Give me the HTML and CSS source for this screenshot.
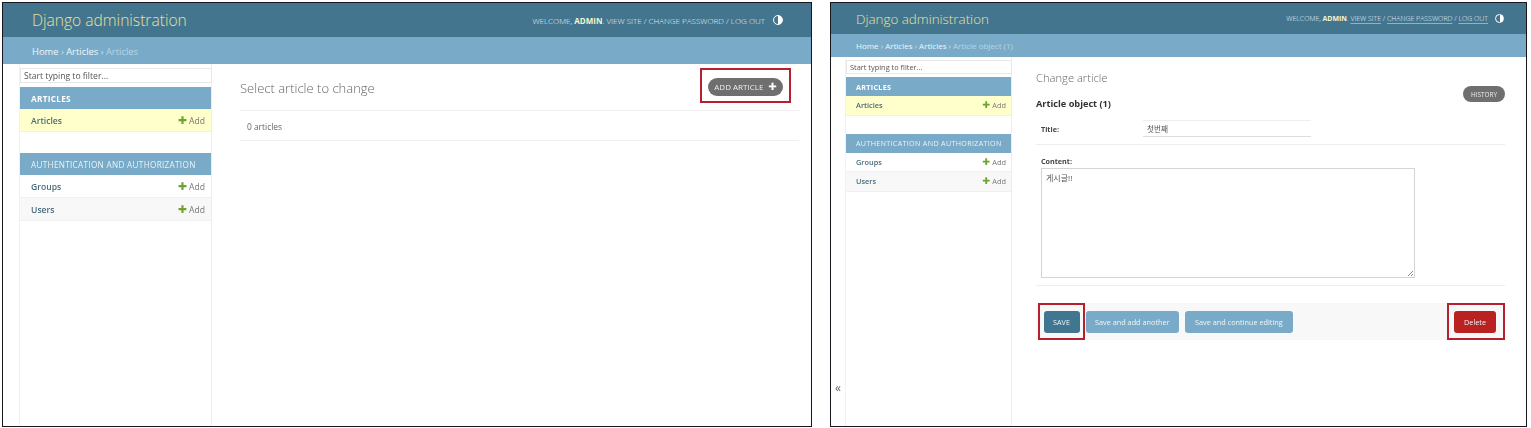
FILE: index.html
```html
<!DOCTYPE html>
<html lang="en">
<head>
  <title>Django administration</title>
  <meta charset="UTF-8">
  <link rel="stylesheet" href="styles.css">
</head>
<body>
  <div class="shots">

    <!-- article list -->
    <div class="win win-list">
      <div class="top">
        <div class="brand">Django administration</div>
        <div class="tools">
          <span>Welcome, <b>admin</b>. View site / Change password / Log out</span>
          <span class="moon"></span>
        </div>
      </div>
      <div class="crumbs"><a>Home</a> › <a>Articles</a> › <span>Articles</span></div>
      <div class="main">
        <div class="side">
          <div class="filter">Start typing to filter...</div>
          <div class="cap strong">Articles</div>
          <div class="row current"><a>Articles</a><span class="add"><i>✚</i> Add</span></div>
          <div class="cap second">Authentication and Authorization</div>
          <div class="row"><a>Groups</a><span class="add"><i>✚</i> Add</span></div>
          <div class="row alt"><a>Users</a><span class="add"><i>✚</i> Add</span></div>
        </div>
        <div class="content">
          <div class="list-head">
            <h1>Select article to change</h1>
            <div class="mark">
              <a class="pill">Add article <b>✚</b></a>
            </div>
          </div>
          <div class="count">0 articles</div>
        </div>
      </div>
    </div>

    <!-- article change form -->
    <div class="win win-edit">
      <div class="top">
        <div class="brand">Django administration</div>
        <div class="tools">
          <span>Welcome, <b>admin</b>. <u>View site</u> / <u>Change password</u> / <u>Log out</u></span>
          <span class="moon"></span>
        </div>
      </div>
      <div class="crumbs"><a>Home</a> › <a>Articles</a> › <a>Articles</a> › <span>Article object (1)</span></div>
      <div class="main">
        <div class="toggle">«</div>
        <div class="side">
          <div class="filter">Start typing to filter...</div>
          <div class="cap strong">Articles</div>
          <div class="row current"><a>Articles</a><span class="add"><i>✚</i> Add</span></div>
          <div class="cap second">Authentication and Authorization</div>
          <div class="row"><a>Groups</a><span class="add"><i>✚</i> Add</span></div>
          <div class="row alt"><a>Users</a><span class="add"><i>✚</i> Add</span></div>
        </div>
        <div class="content">
          <h1>Change article</h1>
          <div class="obj-head">
            <h2>Article object (1)</h2>
            <a class="pill">History</a>
          </div>
          <div class="field field-title">
            <label>Title:</label>
            <div class="input">첫번째</div>
          </div>
          <div class="field field-content">
            <label>Content:</label>
            <div class="area">게시글!!<span class="grip"></span></div>
          </div>
          <div class="submit">
            <div class="mark mark-save"><a class="btn btn-save">Save</a></div>
            <a class="btn">Save and add another</a>
            <a class="btn btn-wide">Save and continue editing</a>
            <div class="mark mark-del"><a class="btn btn-del">Delete</a></div>
          </div>
        </div>
      </div>
    </div>

  </div>
</body>
</html>
```

FILE: styles.css
```css
*{
  box-sizing:border-box;
}
html,body{
  margin:0;
  height:100%;
  background:#fff;
}
body{
  font-family:"Open Sans","Noto Sans CJK KR",sans-serif;
  color:#333;
}
.shots{
  display:flex;
  justify-content:space-between;
  height:428px;
  padding:2px 4px 1px 2px;
  filter:blur(.35px);
}
.win{
  border:1.5px solid #16161c;
  display:flex;
  flex-direction:column;
  overflow:hidden;
}
.win-list{
  width:810px;
}
.win-edit{
  width:697px;
}

/* header */
.top{
  background:#44758f;
  display:flex;
  justify-content:space-between;
  align-items:center;
  flex:none;
}
.brand{
  color:#e6e29a;
  font-weight:300;
}
.tools{
  display:flex;
  align-items:center;
  color:#e6eef2;
  text-transform:uppercase;
  font-weight:300;
}
.tools b{
  color:#f2f7cf;
  font-weight:700;
}
.tools u{
  text-decoration-thickness:1px;
  text-underline-offset:2px;
  text-decoration-color:#8fb3c6;
}
.moon{
  display:block;
  border-radius:50%;
  border:1.5px solid #fff;
  background:linear-gradient(90deg,#44758f 50%,#fff 50%);
}
.crumbs{
  background:#79abc8;
  color:#cfe2ec;
  flex:none;
  display:flex;
  align-items:center;
  white-space:pre;
}
.crumbs a{
  color:#f0f6f9;
}
.crumbs span{
  color:#b9d5e3;
}

/* sidebar */
.main{
  flex:1;
  display:flex;
  min-height:0;
  position:relative;
}
.side{
  flex:none;
  border-left:1px solid #f1f1f1;
  border-right:1px solid #ededed;
  display:flex;
  flex-direction:column;
}
.filter{
  border:1px solid #e8e8e8;
  color:#555;
  display:flex;
  align-items:center;
}
.cap{
  background:#79abc8;
  color:#e9f2f6;
  text-transform:uppercase;
  display:flex;
  align-items:center;
  letter-spacing:.3px;
}
.cap.strong{
  font-weight:700;
  color:#fff;
}
.row{
  display:flex;
  justify-content:space-between;
  align-items:center;
  border-bottom:1px solid #f0f0f0;
  color:#4a6b7a;
}
.row a{
  font-weight:600;
}
.row.current{
  background:#ffffcc;
}
.row.alt{
  background:#f8f8f8;
}
.add{
  color:#777;
}
.add i{
  color:#6da52c;
  font-style:normal;
  font-size:1.25em;
  line-height:1;
  font-family:"DejaVu Sans",sans-serif;
}

h1{
  margin:0;
  color:#666;
  font-weight:300;
}
h2{
  margin:0;
  color:#333;
  font-weight:700;
}
.pill{
  display:flex;
  align-items:center;
  justify-content:center;
  background:#6f6f6f;
  color:#eee;
  border-radius:10px;
  text-transform:uppercase;
}
.pill b{
  color:#fff;
  font-size:1.25em;
  line-height:1;
  font-family:"DejaVu Sans",sans-serif;
  margin-left:5px;
}
.mark{
  border:2px solid #b5202f;
}

/* left window sizes */
.win-list .top{
  height:34px;
  padding:0 28px 0 29px;
}
.win-list .brand{
  font-size:15.6px;
}
.win-list .tools{
  font-size:8px;
  gap:8px;
}
.win-list .moon{
  width:10px;
  height:10px;
}
.win-list .crumbs{
  height:27px;
  padding-left:29px;
  padding-top:1px;
  font-size:9.4px;
}
.win-list .side{
  width:193px;
  margin-left:16px;
  padding-top:4px;
}
.win-list .filter{
  width:192px;
  height:15px;
  padding-left:3px;
  font-size:8.6px;
  margin-bottom:4px;
}
.win-list .cap{
  height:22px;
  padding-left:11px;
  font-size:8.2px;
}
.win-list .cap.second{
  margin-top:21px;
}
.win-list .row{
  height:23px;
  padding:1px 6px 0 11px;
  font-size:8.6px;
}
.win-list .content{
  flex:1;
  padding:0 12px 0 28px;
}
.list-head{
  display:flex;
  justify-content:space-between;
  align-items:flex-start;
  height:47px;
  padding:4px 8px 0 0;
  border-bottom:1px solid #f1f1f1;
}
.list-head h1{
  font-size:13px;
  margin-top:11px;
}
.list-head .mark{
  width:91px;
  height:35px;
  padding-top:2px;
  display:flex;
  align-items:center;
  justify-content:center;
}
.list-head .pill{
  width:75px;
  height:18px;
  font-size:8px;
}
.count{
  height:30px;
  padding:2px 0 0 7px;
  display:flex;
  align-items:center;
  font-size:8.4px;
  color:#666;
  border-bottom:1px solid #f1f1f1;
}

/* right window sizes */
.win-edit .top{
  height:31px;
  padding:0 22px 0 25px;
}
.win-edit .brand{
  font-size:13.4px;
}
.win-edit .tools{
  font-size:6.95px;
  gap:7px;
}
.win-edit .moon{
  width:9px;
  height:9px;
}
.win-edit .crumbs{
  height:23px;
  padding-left:25px;
  font-size:8px;
}
.toggle{
  position:absolute;
  left:4px;
  top:322px;
  font-size:12px;
  color:#666;
}
.win-edit .side{
  width:167px;
  margin-left:14px;
  padding-top:3px;
}
.win-edit .filter{
  width:166px;
  height:14px;
  padding-left:3px;
  font-size:7.4px;
  margin-bottom:3px;
}
.win-edit .cap{
  height:19px;
  padding-left:10px;
  font-size:7.2px;
}
.win-edit .cap.second{
  margin-top:18px;
}
.win-edit .row{
  height:19.5px;
  padding:0 5px 0 10px;
  font-size:7.4px;
}
.win-edit .content{
  flex:1;
  padding:13px 21px 0 24px;
}
.win-edit h1{
  font-size:11.2px;
}
.obj-head{
  display:flex;
  justify-content:space-between;
  align-items:flex-start;
  height:27px;
  margin-top:1px;
}
.obj-head h2{
  font-size:9.2px;
  margin-top:11px;
}
.obj-head .pill{
  width:42px;
  height:16px;
  font-size:6.4px;
}
.field label{
  font-weight:700;
  font-size:7.2px;
  color:#444;
}
.field-title{
  display:flex;
  align-items:center;
  height:32px;
  padding-left:5px;
  border-bottom:1px solid #eee;
}
.field-title label{
  width:102px;
}
.input{
  width:168px;
  height:17px;
  border-top:1px solid #eee;
  border-bottom:1px solid #ddd;
  padding-left:4px;
  font-size:7.6px;
  color:#555;
  display:flex;
  align-items:center;
}
.field-content{
  padding:10px 0 0 5px;
  height:141px;
  border-bottom:1px solid #eee;
}
.field-content label{
  display:block;
  height:13px;
  line-height:12px;
}
.area{
  width:374px;
  height:110px;
  border:1px solid #d4d4d4;
  padding:3px 4px;
  font-size:8px;
  color:#555;
  position:relative;
}
.grip{
  position:absolute;
  right:1px;
  bottom:1px;
  width:6px;
  height:6px;
  background:linear-gradient(135deg,transparent 50%,#888 50%,#888 60%,transparent 60%,transparent 75%,#888 75%,#888 85%,transparent 85%);
}
.submit{
  margin-top:17px;
  height:37px;
  background:#f8f8f8;
  display:flex;
  align-items:center;
  gap:6px;
  padding:0 0 0 2px;
}
.btn{
  height:22px;
  padding:0 9px;
  display:flex;
  align-items:center;
  background:#79abc8;
  color:#eef5f8;
  border-radius:3px;
  font-size:7.3px;
}
.btn-wide{
  padding:0 10.5px;
}
.mark-save{
  width:47px;
  height:37px;
  display:flex;
  align-items:center;
  justify-content:center;
  margin-right:-5px;
}
.btn-save{
  width:36px;
  padding:0;
  justify-content:center;
  background:#417690;
  text-transform:uppercase;
  font-size:7.2px;
}
.mark-del{
  width:58px;
  height:37px;
  margin-left:auto;
  display:flex;
  align-items:center;
  justify-content:center;
  padding-right:2px;
}
.btn-del{
  width:42px;
  padding:0;
  justify-content:center;
  background:#ba2121;
}
```
